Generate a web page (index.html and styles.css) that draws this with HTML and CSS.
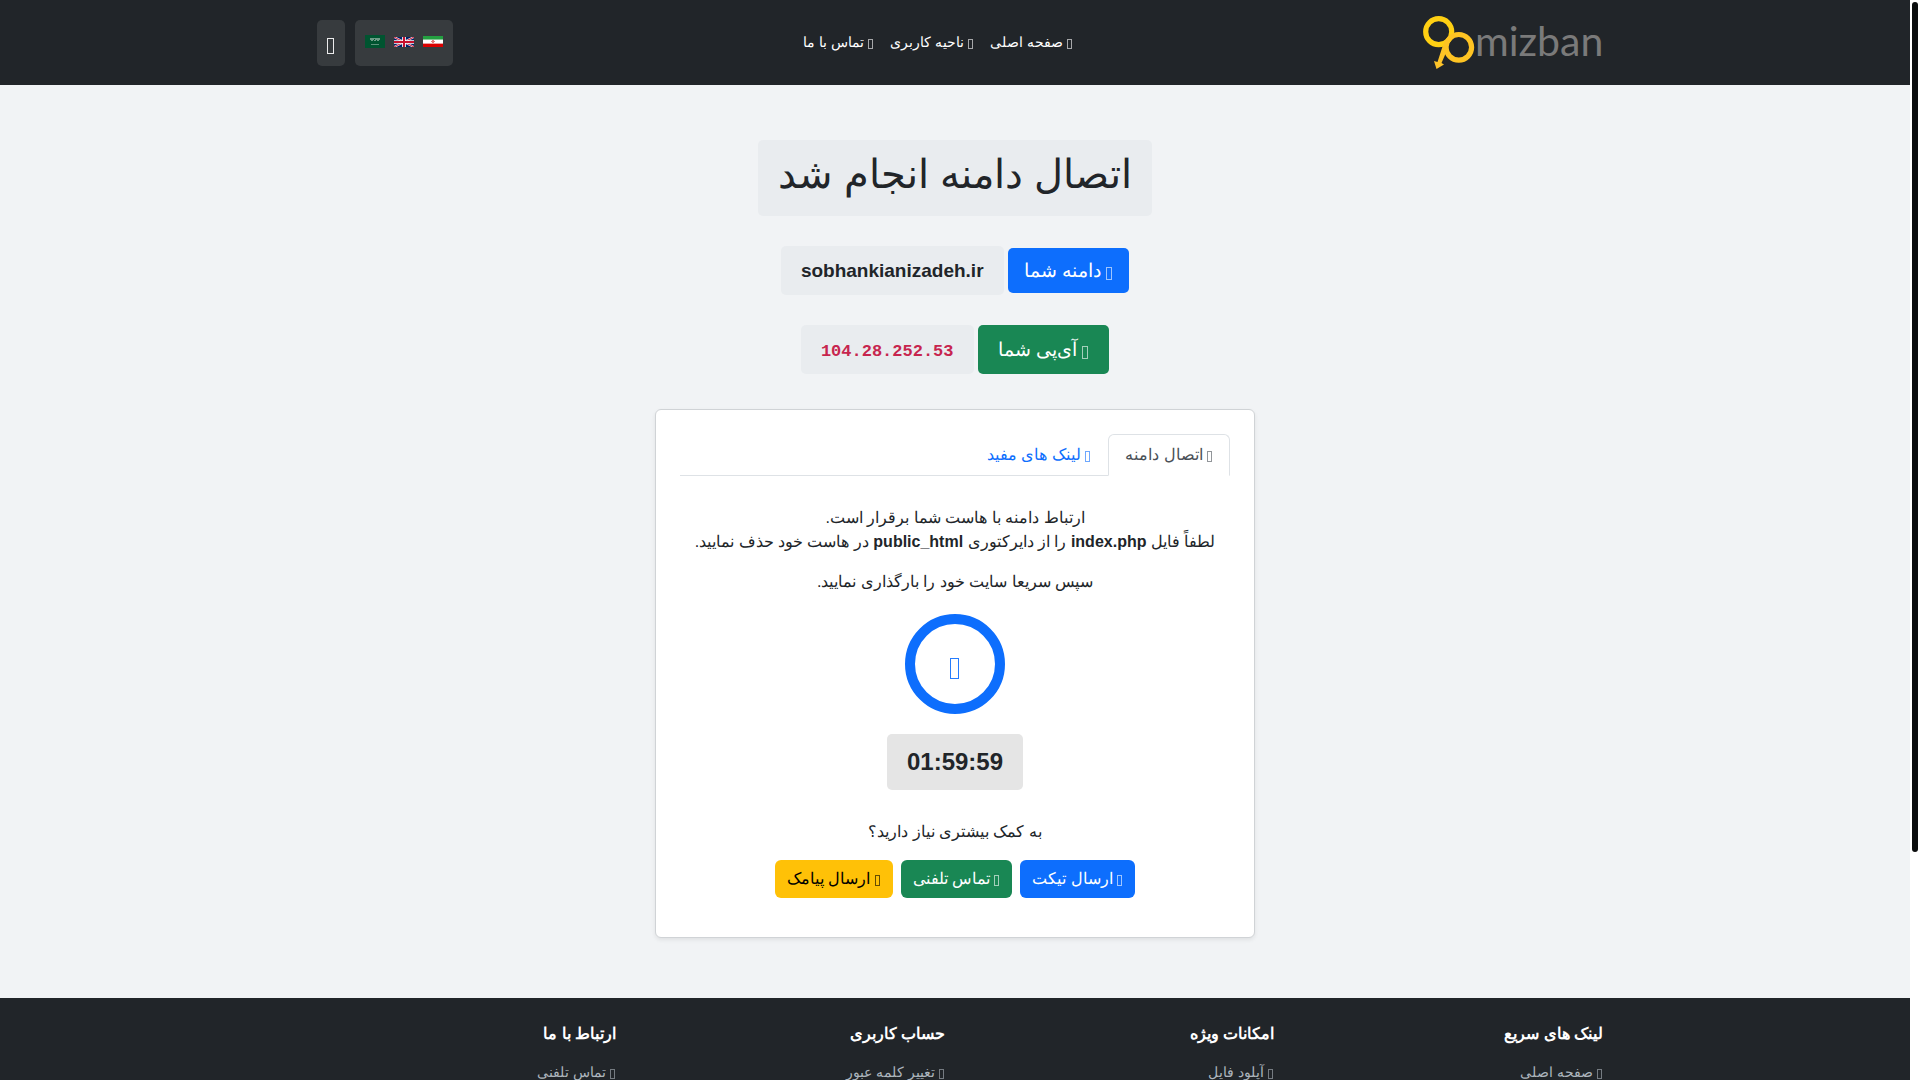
FILE: index.html
```html
<!DOCTYPE html>
<html lang="fa" dir="rtl">
<head>
<meta charset="utf-8">
<meta name="viewport" content="width=device-width, initial-scale=1">
<title>اتصال دامنه انجام شد</title>
<link rel="stylesheet" href="styles.css">
</head>
<body>
<header class="header">
  <div class="container header-row">
    <a class="logo" href="#" aria-label="90mizban">
      <svg width="180" height="58" viewBox="0 0 180 58" direction="ltr">
        <defs>
          <linearGradient id="gold" x1="0" y1="0" x2="0" y2="1">
            <stop offset="0" stop-color="#fec423"/>
            <stop offset="1" stop-color="#fcc32b"/>
          </linearGradient>
        </defs>
        <g fill="none" stroke="#ffd013" stroke-width="5.200">
          <circle cx="15.700" cy="17.700" r="13"/>
          <circle cx="35.800" cy="33.300" r="12.800" stroke="#fec423"/>
        </g>
        <path d="M20 31 L25.500 33 L18.500 49 L21 50.500 L13.500 55 L11 47 L14.500 48 Z" fill="url(#gold)"/>
        <text class="logo-text" x="52" y="42">mizban</text>
      </svg>
    </a>
    <nav class="main-nav">
      <a href="#"><i class="icon icon-small"></i> صفحه اصلی</a>
      <a href="#"><i class="icon icon-small"></i> ناحیه کاربری</a>
      <a href="#"><i class="icon icon-small"></i> تماس با ما</a>
    </nav>
    <div class="tools">
      <div class="languages">
        <a href="#" aria-label="فارسی">
          <svg width="20" height="11" viewBox="0 0 20 11"><path fill="#fff" d="M0 0h20v11H0z"/><path fill="#239f40" d="M0 0h20v3H0z"/><path fill="#86c796" d="M0 3h20v1H0z"/><path fill="#da0000" d="M0 8h20v3H0z"/><path fill="#eda0a0" d="M0 7h20v1H0z"/><path fill="#e77b7b" d="M9 4h2v3H9zM8 5h4v1H8z"/></svg>
        </a>
        <a href="#" aria-label="English">
          <svg width="20" height="10" viewBox="0 0 60 30"><path fill="#012169" d="M0 0h60v30H0z"/><path stroke="#fff" stroke-width="6" d="M0 0l60 30M60 0L0 30"/><path stroke="#c8102e" stroke-width="3" d="M0 0l60 30M60 0L0 30"/><path stroke="#fff" stroke-width="11" d="M30 0v30M0 15h60"/><path stroke="#c8102e" stroke-width="6" d="M30 0v30M0 15h60"/></svg>
        </a>
        <a href="#" aria-label="العربية">
          <svg width="20" height="13" viewBox="0 0 20 13"><path fill="#005430" d="M0 0h20v13H0z"/><path stroke="#6f9c87" fill="none" d="M5 3.500h10M5 4.500h4m1 0h5M6 5.500h2m1 0h2m1 0h2"/><path stroke="#5d917b" d="M6 9.500h8"/></svg>
        </a>
      </div>
      <button class="theme-toggle" type="button" aria-label="تغییر پوسته"><i class="icon icon-large"></i></button>
    </div>
  </div>
</header>

<main class="main">
  <h1 class="title">اتصال دامنه انجام شد</h1>
  <div class="info-row">
    <span class="label label-domain"><i class="icon icon-medium"></i> دامنه شما</span>
    <strong class="value">sobhankianizadeh.ir</strong>
  </div>
  <div class="info-row">
    <span class="label label-ip"><i class="icon icon-medium"></i> آی‌پی شما</span>
    <span class="value"><code>104.28.252.53</code></span>
  </div>

  <section class="card">
    <div class="tabs" role="tablist">
      <button class="tab active" type="button" role="tab" aria-selected="true"><i class="icon"></i> اتصال دامنه</button>
      <button class="tab" type="button" role="tab" aria-selected="false"><i class="icon"></i> لینک های مفید</button>
    </div>
    <div class="panel" role="tabpanel">
      <p>ارتباط دامنه با هاست شما برقرار است.<br>لطفاً فایل <b>index.php</b> را از دایرکتوری <b>public_html</b> در هاست خود حذف نمایید.</p>
      <p>سپس سریعا سایت خود را بارگذاری نمایید.</p>
      <div class="ring"><i class="icon icon-huge"></i></div>
      <div class="timer">01:59:59</div>
      <p>به کمک بیشتری نیاز دارید؟</p>
      <div class="actions">
        <a class="button blue" href="#"><i class="icon"></i> ارسال تیکت</a>
        <a class="button green" href="#"><i class="icon"></i> تماس تلفنی</a>
        <a class="button yellow" href="#"><i class="icon"></i> ارسال پیامک</a>
      </div>
    </div>
  </section>
</main>

<footer class="footer">
  <div class="container footer-grid">
    <section>
      <h2>لینک های سریع</h2>
      <a href="#"><i class="icon icon-small"></i> صفحه اصلی</a>
    </section>
    <section>
      <h2>امکانات ویژه</h2>
      <a href="#"><i class="icon icon-small"></i> آپلود فایل</a>
    </section>
    <section>
      <h2>حساب کاربری</h2>
      <a href="#"><i class="icon icon-small"></i> تغییر کلمه عبور</a>
    </section>
    <section>
      <h2>ارتباط با ما</h2>
      <a href="#"><i class="icon icon-small"></i> تماس تلفنی</a>
    </section>
  </div>
</footer>
<div class="scroll-track" aria-hidden="true"><div class="scroll-thumb"></div></div>
</body>
</html>
```
FILE: styles.css
```css
* { box-sizing: border-box; }

html {
  background: #fff;
  scrollbar-width: none;
}

body {
  margin: 0;
  padding-right: 10px;
  color: #212529;
  font: 16px/24px "Liberation Sans", sans-serif;
}

a { color: inherit; text-decoration: none; }
button { font: inherit; cursor: pointer; }

.container {
  max-width: 1320px;
  margin: 0 auto;
  padding: 0 12px;
}

/* Outlined placeholder box, one size per text size */
.icon {
  display: inline-block;
  width: 5px;
  height: 11px;
  margin-inline-start: 1px;
  border: 1px solid;
  opacity: .6;
  vertical-align: -2px;
}
.icon-small { height: 10px; }
.icon-medium { width: 6px; height: 13px; vertical-align: -3px; }
.icon-large { width: 7px; height: 16px; opacity: .9; }
.icon-huge { width: 9px; height: 21px; opacity: .9; }

.header { background: #212529; color: #fff; }
.header-row {
  display: flex;
  align-items: center;
  justify-content: space-between;
  min-height: 85px;
}
.logo svg { display: block; overflow: visible; }
.logo-text {
  direction: ltr;
  font-family: Lato, sans-serif;
  font-size: 41px;
  fill: #7a7a7a;
}
.main-nav { display: flex; font-size: 14px; }
.main-nav a { padding: 7px 8px 9px; }
.tools { display: flex; gap: 10px; margin-inline-end: 10px; }
.languages {
  display: flex;
  align-items: center;
  gap: 9px;
  height: 46px;
  padding: 0 10px 2px;
  border-radius: 5px;
  background: #373b3e;
}
.languages svg { display: block; }
.theme-toggle {
  height: 46px;
  padding: 8px 10px 0;
  border: 0;
  border-radius: 5px;
  background: #373b3e;
  color: #fff;
}

.main {
  display: flex;
  flex-direction: column;
  align-items: center;
  padding: 55px 12px 60px;
  background: #f1f3f5;
}
.title {
  margin: 0 0 30px;
  padding: 10px 20px 18px;
  border-radius: 5px;
  background: #e9ecef;
  font-size: 40px;
  font-weight: 400;
  line-height: 48px;
}
.info-row {
  display: flex;
  align-items: center;
  gap: 4px;
  margin-bottom: 30px;
  font-size: 19px;
  line-height: 29px;
}
.label, .value { border-radius: 5px; }
.label { color: #fff; }
.label-domain { padding: 8px 16px; background: #0d6efd; }
.label-ip { padding: 10px 20px; background: #198754; }
.value { padding: 10px 20px; background: #e9ecef; }
.value code {
  color: #c7254e;
  font: 700 17px "Liberation Mono", monospace;
}

.card {
  width: 600px;
  max-width: 100%;
  margin-top: 5px;
  padding: 24px;
  border: 1px solid #d0d3d6;
  border-radius: 6px;
  background: #fff;
  box-shadow: 0 2px 4px rgba(0, 0, 0, .075);
}
.tabs { display: flex; border-bottom: 1px solid #dee2e6; }
.tab {
  margin-bottom: -1px;
  padding: 8px 16px;
  border: 1px solid transparent;
  border-radius: 6px 6px 0 0;
  background: none;
  color: #0d6efd;
}
.tab.active {
  border-color: #dee2e6 #dee2e6 #fff;
  background: #fff;
  color: #495057;
}
.panel {
  display: flex;
  flex-direction: column;
  align-items: center;
  padding: 30px 0 15px;
  text-align: center;
}
.panel p { margin: 0 0 16px; }
.ring {
  display: flex;
  align-items: center;
  justify-content: center;
  width: 100px;
  height: 100px;
  margin: 4px 0 20px;
  padding-top: 8px;
  border: 10px solid #0d6efd;
  border-radius: 50%;
  color: #0d6efd;
}
.timer {
  margin-bottom: 30px;
  padding: 10px 20px;
  border-radius: 5px;
  background: #e5e5e5;
  font-size: 24px;
  font-weight: 700;
  line-height: 36px;
}
.actions { display: flex; flex-wrap: wrap; justify-content: center; gap: 8px; }
.button { padding: 7px 12px; border-radius: 6px; color: #fff; }
.blue { background: #0d6efd; }
.green { background: #198754; }
.yellow { background: #ffc107; color: #000; }

.footer {
  min-height: 368px;
  padding: 24px 0;
  background: #212529;
  color: #adb5bd;
  font-size: 14px;
}
.footer-grid {
  display: grid;
  grid-template-columns: repeat(4, 1fr);
  gap: 20px;
}
.footer h2 {
  margin: 0 0 14px;
  color: #fff;
  font-size: 16px;
  font-weight: 700;
  line-height: 24px;
}

/* Page scroll indicator, always on top at the right edge */
.scroll-track {
  position: fixed;
  top: 0;
  right: 0;
  bottom: 0;
  width: 10px;
  padding: 2px;
  background: #fff;
}
.scroll-thumb {
  height: 79%;
  border-radius: 3px;
  background: #0b0d0e;
}
```
